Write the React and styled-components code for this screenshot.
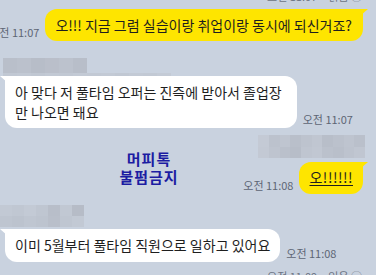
import styled, { createGlobalStyle } from "styled-components";

const GlobalStyle = createGlobalStyle`
  body {
    margin: 0;
    background: #c9d2df;
  }
`;

const Screen = styled.div`
  position: relative;
  width: 376px;
  height: 275px;
  overflow: hidden;
  background: #c9d2df;
  font-family: "Noto Sans CJK KR", "Noto Sans", sans-serif;
  display: flex;
  flex-direction: column;
`;

const Row = styled.div`
  display: flex;
  align-items: flex-end;
  gap: 6px;
  justify-content: ${(p) => (p.$mine ? "flex-end" : "flex-start")};
  padding: 0 13px 0 ${(p) => p.$left ?? 5}px;
  margin-top: ${(p) => p.$mt || 0}px;
`;

const Bubble = styled.div`
  position: relative;
  flex-shrink: 0;
  background: ${(p) => (p.$mine ? "#fee500" : "#ffffff")};
  color: #1e1e1e;
  font-size: 14px;
  line-height: ${(p) => p.$lh || 19}px;
  padding: ${(p) => p.$pad || "7px 10px"};
  border-radius: ${(p) => (p.$mine ? "12px 3px 12px 12px" : "3px 12px 12px 12px")};
  white-space: nowrap;

  &::after {
    content: "";
    position: absolute;
    top: 0;
    width: 0;
    height: 0;
    border-bottom: 7px solid transparent;
    ${(p) =>
      p.$mine
        ? "right: -5px; border-left: 8px solid #fee500;"
        : "left: -5px; border-right: 8px solid #ffffff;"}
  }
`;

const Underlined = styled.span`
  text-decoration: underline;
  text-underline-offset: 2px;
  letter-spacing: 0.5px;
`;

const Time = styled.span`
  flex-shrink: 0;
  font-size: 11px;
  line-height: 13px;
  color: #5d6574;
  margin-bottom: 2px;
  white-space: nowrap;
`;

const Cut = styled.div`
  height: ${(p) => p.$h}px;
  overflow: hidden;
  display: flex;
  justify-content: flex-end;
  padding-right: 14px;
  margin-top: ${(p) => p.$mt || 0}px;
`;

const CutText = styled.span`
  font-size: 11px;
  line-height: 13px;
  color: #6c7483;
  margin-top: ${(p) => p.$shift}px;
  white-space: nowrap;
`;

const Mosaic = styled.div`
  display: grid;
  grid-template-columns: ${(p) => p.$cols};
  grid-template-rows: ${(p) => p.$rows};
  width: max-content;
  margin-top: ${(p) => p.$mt || 0}px;
  margin-left: ${(p) => p.$ml || 0}px;
  align-self: ${(p) => (p.$right ? "flex-end" : "flex-start")};
  margin-right: ${(p) => (p.$right ? 11 : 0)}px;
  filter: blur(0.6px);
`;

const Cell = styled.div`
  background: ${(p) => p.$c};
`;

const Watermark = styled.div`
  position: absolute;
  left: 114px;
  top: 150px;
  width: 70px;
  text-align: center;
  color: #1c1ca2;
  font-weight: 700;
  font-size: 15px;
  line-height: 18px;
  letter-spacing: 1px;
`;

const name1 = [
  "#b9bfca", "#bbc1cc", "#b7bdc8", "#babfca", "#bcc2cd", "#b8bec9", "transparent", "transparent", "transparent", "transparent", "transparent", "transparent",
  "#c1c8d3", "#c2c9d4", "#c0c7d2", "#c2c9d4", "#c1c8d3", "#c3cad5", "#c2c9d4", "#c3cad5", "#c1c8d3", "#c3cad5", "#c2c9d4", "#c4cbd6",
];

const blurRight = [
  "#c4cad5", "#bcc2cd", "#bfc5d0", "#b9bfca", "#bdc3ce", "#c0c6d1", "#b8bec9", "#bbc1cc", "#bec4cf", "#bac0cb",
  "#c3c9d4", "#bec4cf", "#bac0cb", "#b7bdc8", "#bfc5d0", "#c1c7d2", "#bbc1cc", "#b9bfca", "#bdc3ce", "#c0c6d1",
];

const name2 = [
  "#c2c9d4", "#c0c7d2", "#c3cad5", "#bfc6d1", "#b8bec9", "#c1c8d3", "#b6bcc7",
  "#bec5d0", "#bcc3ce", "#bfc6d1", "#bdc4cf", "#b9bfca", "#bfc6d1", "#c2c9d4",
];

export default function App() {
  return (
    <Screen>
      <GlobalStyle />
      <Cut $h={3}>
        <CutText $shift={-10}>오전 11:07 · 읽음 ◯</CutText>
      </Cut>

      <Row $mine $mt={6}>
        <Time>오전 11:07</Time>
        <Bubble $mine $pad="7px 11px 6px 10px">
          오!!! 지금 그럼 실습이랑 취업이랑 동시에 되신거죠?
        </Bubble>
      </Row>

      <Mosaic $mt={17} $ml={3} $cols="repeat(12, 14px)" $rows="15px 3px">
        {name1.map((c, i) => (
          <Cell key={i} $c={c} />
        ))}
      </Mosaic>

      <Row>
        <Bubble $lh={20} $pad="6px 15px 6px 10px">
          아 맞다 저 풀타임 오퍼는 진즉에 받아서 졸업장
          <br />
          만 나오면 돼요
        </Bubble>
        <Time>오전 11:07</Time>
      </Row>

      <Mosaic $right $mt={7} $cols="repeat(10, 10.7px)" $rows="12px 11px">
        {blurRight.map((c, i) => (
          <Cell key={i} $c={c} />
        ))}
      </Mosaic>

      <Row $mine $mt={4}>
        <Time>오전 11:08</Time>
        <Bubble $mine $pad="6px 10px 7px 10px">
          <Underlined>오!!!!!!</Underlined>
        </Bubble>
      </Row>

      <Mosaic $mt={11} $cols="repeat(7, 12px)" $rows="11px 11px">
        {name2.map((c, i) => (
          <Cell key={i} $c={c} />
        ))}
      </Mosaic>

      <Row $mt={2}>
        <Bubble $pad="7px 10px">이미 5월부터 풀타임 직원으로 일하고 있어요</Bubble>
        <Time>오전 11:08</Time>
      </Row>

      <Cut $h={6} $mt={8}>
        <CutText $shift={0}>오전 11:09 · 읽음 ◯</CutText>
      </Cut>

      <Watermark>
        머피톡
        <br />
        불펌금지
      </Watermark>
    </Screen>
  );
}
